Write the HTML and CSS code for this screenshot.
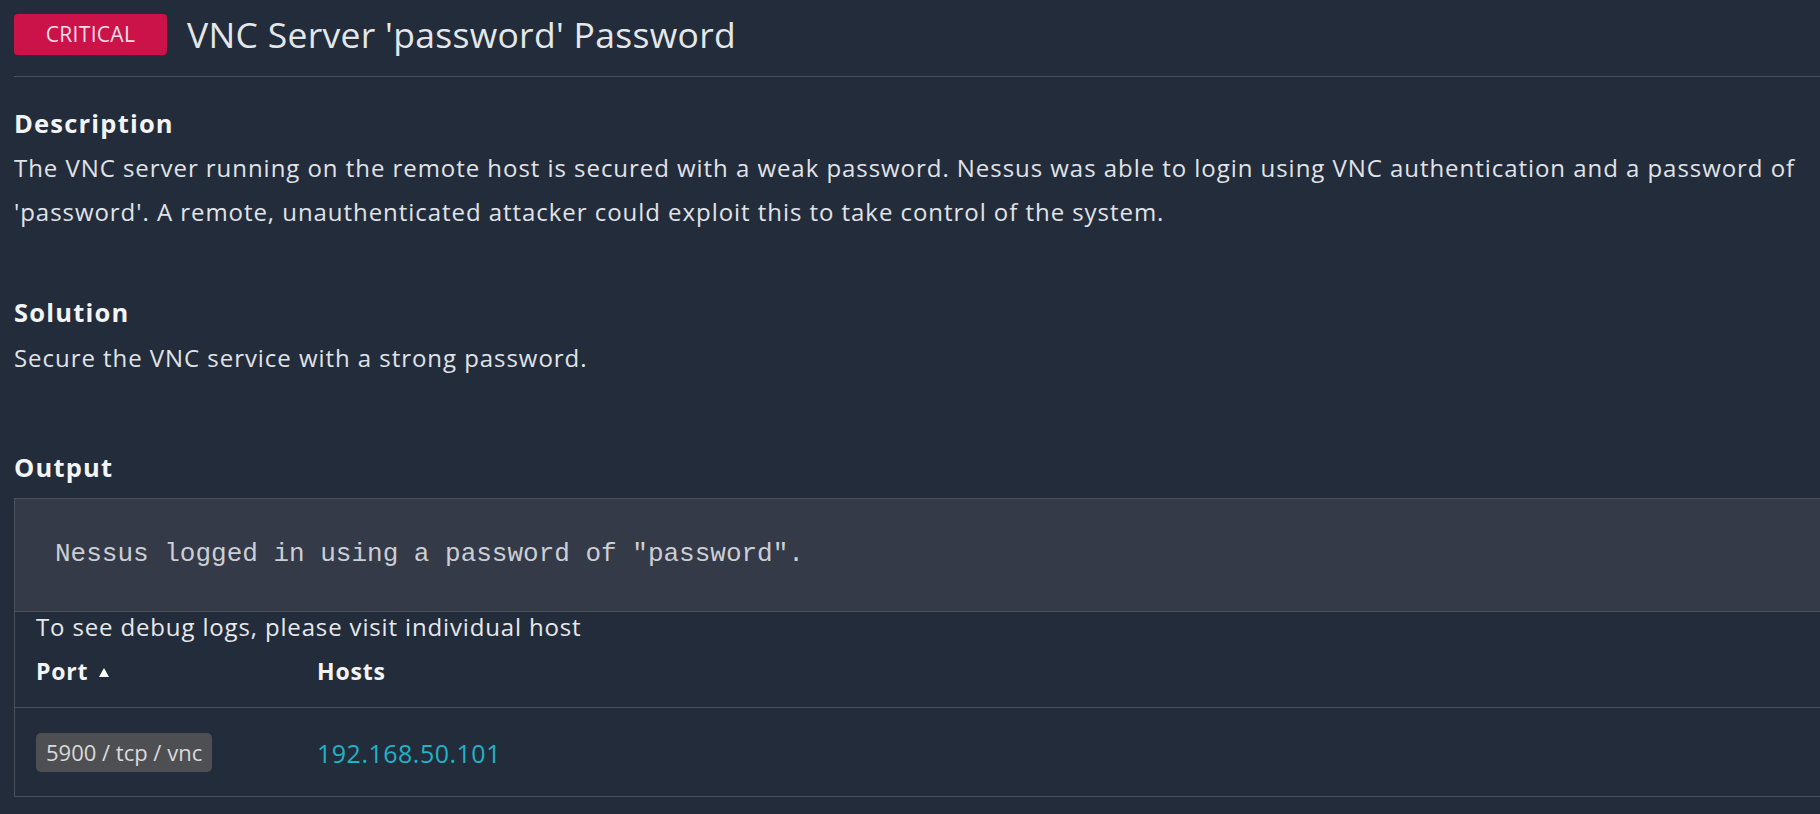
FILE: index.html
```html
<!DOCTYPE html>
<html>
<head>
<meta charset="utf-8">
<link rel="stylesheet" href="styles.css">
</head>
<body>
<div class="page">
  <div class="header">
    <span class="severity">CRITICAL</span>
    <h1 class="title">VNC Server 'password' Password</h1>
  </div>

  <section class="block">
    <h2 class="block-title">Description</h2>
    <p class="block-text">The VNC server running on the remote host is secured with a weak password. Nessus was able to login using VNC authentication and a password of 'password'. A remote, unauthenticated attacker could exploit this to take control of the system.</p>
  </section>

  <section class="block solution">
    <h2 class="block-title">Solution</h2>
    <p class="block-text">Secure the VNC service with a strong password.</p>
  </section>

  <section class="block output">
    <h2 class="block-title">Output</h2>
    <div class="output-box">
      <pre class="output-pre">Nessus logged in using a password of "password".</pre>
      <div class="debug-note">To see debug logs, please visit individual host</div>
      <div class="table">
        <div class="table-head">
          <div class="th">Port <svg class="sort" width="10" height="9" viewBox="0 0 10 9"><polygon points="5,0 10,9 0,9" fill="#ffffff"/></svg></div>
          <div class="th">Hosts</div>
        </div>
        <div class="table-row">
          <div class="td"><span class="port">5900 / tcp / vnc</span></div>
          <div class="td"><span class="host">192.168.50.101</span></div>
        </div>
      </div>
    </div>
  </section>
</div>
</body>
</html>
```
FILE: styles.css
```css
html, body {
  margin: 0;
  padding: 0;
  background: #232c3b;
  overflow: hidden;
}
body {
  font-family: "Open Sans", "Noto Sans", sans-serif;
  color: #dfe2e6;
}
.page {
  width: 1840px;
  padding-left: 14px;
}
.header {
  display: flex;
  align-items: center;
  gap: 20px;
  padding-top: 14px;
  padding-bottom: 21px;
  border-bottom: 1px solid #4a4f5b;
}
.severity {
  display: inline-block;
  width: 153px;
  height: 41px;
  line-height: 41px;
  text-align: center;
  background: #cc1349;
  color: #f6dfe6;
  font-size: 21px;
  letter-spacing: 0.3px;
  border-radius: 4px;
}
.title {
  margin: 0;
  font-size: 35.5px;
  font-weight: 400;
  letter-spacing: 0.3px;
  line-height: 41px;
  color: #e4e7ea;
}
.block-title {
  margin: 0;
  font-size: 25.5px;
  font-weight: 700;
  letter-spacing: 1.2px;
  line-height: 44px;
  color: #f3f4f6;
}
.block-text {
  margin: 0;
  padding-top: 1px;
  font-size: 24px;
  letter-spacing: 0.95px;
  line-height: 44px;
  color: #e0e3e7;
}
.block {
  margin-top: 24px;
}
.solution {
  margin-top: 56px;
}
.solution .block-text {
  padding-top: 2px;
}
.output {
  margin-top: 65px;
}
.output-box {
  margin-top: 9px;
  border-left: 1px solid #4a505c;
  border-bottom: 1px solid #4a505c;
}
.output-pre {
  margin: 0;
  background: #343a48;
  border-top: 1px solid #4a505c;
  border-bottom: 1px solid #4a505c;
  padding: 40px 0 42px 40px;
  font-family: "Liberation Mono", "Courier New", monospace;
  font-size: 26px;
  line-height: 30px;
  color: #cbced4;
}
.debug-note {
  padding-left: 21px;
  font-size: 24px;
  letter-spacing: 0.85px;
  line-height: 30px;
  color: #e6e8eb;
}
.table-head, .table-row {
  display: grid;
  grid-template-columns: 281px 1fr;
  padding-left: 21px;
}
.table-head {
  padding-top: 14px;
  padding-bottom: 21px;
  border-bottom: 1px solid #4a505c;
}
.th {
  font-size: 23px;
  font-weight: 700;
  letter-spacing: 0.8px;
  line-height: 30px;
  color: #f3f4f6;
  display: flex;
  align-items: center;
}
.sort {
  margin-left: 11px;
  margin-top: 3px;
}
.table-row {
  padding-top: 25px;
  padding-bottom: 24px;
  align-items: center;
}
.port {
  display: inline-block;
  height: 39px;
  line-height: 39px;
  padding: 0 10px;
  background: #4e4f52;
  color: #dadada;
  border-radius: 5px;
  font-size: 22px;
}
.host {
  font-size: 25px;
  letter-spacing: 0.5px;
  color: #1fb3c8;
}
```
